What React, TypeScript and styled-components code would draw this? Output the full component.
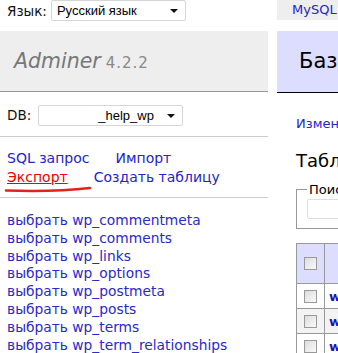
import React from "react";
import styled, { createGlobalStyle } from "styled-components";

const tables = [
  "wp_commentmeta",
  "wp_comments",
  "wp_links",
  "wp_options",
  "wp_postmeta",
  "wp_posts",
  "wp_terms",
  "wp_term_relationships",
];

const App: React.FC = () => {
  return (
    <>
      <GlobalStyle />
      <Page>
        <Sidebar>
          <LangRow>
            <Label>Язык:</Label>
            <FakeSelect width={135}>
              <SelectText>Русский язык</SelectText>
              <Arrow />
            </FakeSelect>
          </LangRow>
          <LogoBand>
            <LogoName>Adminer</LogoName>
            <Version>4.2.2</Version>
          </LogoBand>
          <DbRow>
            <Label>DB:</Label>
            <FakeSelect width={145}>
              <DbValue>_help_wp</DbValue>
              <Arrow />
            </FakeSelect>
          </DbRow>
          <Rule gap={11} />
          <Actions>
            <ActionLine>
              <Link>SQL запрос</Link>
              <Link>Импорт</Link>
            </ActionLine>
            <ActionLine>
              <ExportWrap>
                <Link active>Экспорт</Link>
                <Scribble viewBox="0 0 90 8">
                  <path d="M2 5.5 C 30 6.5, 60 6, 86 3" stroke="#e3231b" strokeWidth="2.6" fill="none" strokeLinecap="round" />
                </Scribble>
              </ExportWrap>
              <Link>Создать таблицу</Link>
            </ActionLine>
          </Actions>
          <Rule gap={10} />
          <TableList>
            {tables.map((t) => (
              <ListLink key={t}>выбрать {t}</ListLink>
            ))}
          </TableList>
        </Sidebar>

        <Content>
          <Breadcrumb>
            <Link>MySQL</Link> » Сервер » help_wp
          </Breadcrumb>
          <Heading>База данных: help_wp</Heading>
          <Body>
            <SmallLink>Изменить базу данных</SmallLink>
            <SubHeading>Таблицы и представления</SubHeading>
            <Fieldset>
              <Legend>Поиск данных в таблицах</Legend>
              <SearchInput />
            </Fieldset>
            <Grid>
              <HeadRow>
                <CheckCell>
                  <Check />
                </CheckCell>
                <HeadCell>Таблица</HeadCell>
              </HeadRow>
              <Row odd={false}>
                <CheckCell>
                  <Check />
                </CheckCell>
                <NameCell>
                  <TableName>wp_commentmeta</TableName>
                </NameCell>
              </Row>
              <Row odd>
                <CheckCell>
                  <Check />
                </CheckCell>
                <NameCell>
                  <TableName>wp_comments</TableName>
                </NameCell>
              </Row>
              <Row odd={false}>
                <CheckCell>
                  <Check />
                </CheckCell>
                <NameCell>
                  <TableName>wp_links</TableName>
                </NameCell>
              </Row>
            </Grid>
          </Body>
        </Content>
      </Page>
    </>
  );
};

export default App;

// ------------------ Styled Components ------------------

const GlobalStyle = createGlobalStyle`
  html, body {
    margin: 0;
    padding: 0;
    background: #fff;
  }
  body {
    font-family: "DejaVu Sans", Verdana, sans-serif;
    font-size: 13px;
    color: #000;
  }
`;

const Page = styled.div`
  display: flex;
  align-items: flex-start;
  width: 338px;
  height: 353px;
  overflow: hidden;
`;

// левое меню
const Sidebar = styled.div`
  flex: none;
  width: 268px;
  display: flex;
  flex-direction: column;
`;

const LangRow = styled.div`
  display: flex;
  align-items: center;
  gap: 4px;
  height: 21px;
  padding-left: 7px;
`;

const Label = styled.span`
  font-size: 13.5px;
  color: #111;
`;

const FakeSelect = styled.div<{ width: number }>`
  position: relative;
  box-sizing: border-box;
  width: ${({ width }) => width}px;
  height: 21px;
  border: 1px solid #d6d6d6;
  border-radius: 2px;
  background: #fff;
  display: flex;
  align-items: center;
`;

const SelectText = styled.span`
  font-family: "Liberation Sans", Arial, sans-serif;
  font-size: 13px;
  padding-left: 5px;
  color: #000;
`;

const DbValue = styled.span`
  font-family: "Liberation Sans", Arial, sans-serif;
  font-size: 13px;
  padding-left: 59px;
  color: #000;
`;

const Arrow = styled.span`
  position: absolute;
  right: 7px;
  top: 8px;
  width: 0;
  height: 0;
  border-left: 4px solid transparent;
  border-right: 4px solid transparent;
  border-top: 4px solid #111;
`;

const LogoBand = styled.div`
  margin-top: 10px;
  height: 61px;
  box-sizing: border-box;
  background: #eee;
  border-bottom: 1px solid #999;
  display: flex;
  align-items: baseline;
  padding: 18px 0 0 14px;
  gap: 5px;
`;

const LogoName = styled.span`
  font-size: 20.5px;
  font-style: italic;
  color: #777;
`;

const Version = styled.span`
  font-size: 15px;
  letter-spacing: 1px;
  color: #888;
`;

const DbRow = styled.div`
  display: flex;
  align-items: center;
  gap: 7px;
  padding: 13px 0 0 7px;
  height: 20px;
`;

const Rule = styled.div<{ gap: number }>`
  height: 1px;
  background: #ccc;
  margin-top: ${({ gap }) => gap}px;
`;

const Actions = styled.div`
  display: flex;
  flex-direction: column;
  padding: 12px 0 0 7px;
`;

const ActionLine = styled.div`
  display: flex;
  gap: 26px;
  line-height: 19px;
`;

const Link = styled.a<{ active?: boolean }>`
  color: ${({ active }) => (active ? "#e00" : "#2424c8")};
  text-decoration: ${({ active }) => (active ? "underline" : "none")};
  font-size: 14px;
  cursor: pointer;
`;

const ExportWrap = styled.span`
  position: relative;
`;

const Scribble = styled.svg`
  position: absolute;
  left: -3px;
  top: 17px;
  width: 90px;
  height: 8px;
`;

const TableList = styled.div`
  display: flex;
  flex-direction: column;
  padding: 14px 0 0 7px;
`;

const ListLink = styled.a`
  color: #2a2ac8;
  font-size: 13.8px;
  line-height: 17.8px;
  white-space: nowrap;
  cursor: pointer;
`;

// правая часть
const Content = styled.div`
  flex: none;
  width: 560px;
  margin-left: 9px;
  display: flex;
  flex-direction: column;
`;

const Breadcrumb = styled.div`
  height: 20px;
  background: #eee;
  padding-left: 15px;
  line-height: 20px;
  font-size: 13px;
  white-space: nowrap;

  ${Link} {
    font-size: 13px;
  }
`;

const Heading = styled.h2`
  margin: 11px 0 0;
  height: 62px;
  box-sizing: border-box;
  background: #ddf;
  border-bottom: 1px solid #000;
  font-size: 21px;
  font-weight: normal;
  padding-left: 22px;
  line-height: 61px;
  white-space: nowrap;
`;

const Body = styled.div`
  padding-left: 19px;
  display: flex;
  flex-direction: column;
  align-items: flex-start;
`;

const SmallLink = styled.a`
  color: #2424c8;
  font-size: 13px;
  margin-top: 23px;
  line-height: 16px;
`;

const SubHeading = styled.h3`
  margin: 18px 0 0;
  font-size: 18px;
  font-weight: normal;
  line-height: 22px;
  white-space: nowrap;
`;

const Fieldset = styled.fieldset`
  margin: 10px 0 0;
  padding: 2px 10px 9px;
  border: 1px solid #999;
  width: 300px;
`;

const Legend = styled.legend`
  font-size: 13px;
  padding: 0 2px;
  white-space: nowrap;
`;

const SearchInput = styled.div`
  width: 180px;
  height: 18px;
  border: 1px solid #ddd;
  border-radius: 2px;
`;

const Grid = styled.div`
  margin-top: 14px;
  border-top: 1px solid #999;
  border-left: 1px solid #999;
  display: flex;
  flex-direction: column;
`;

const HeadRow = styled.div`
  display: flex;
  height: 40px;
  background: #ddf;
  border-bottom: 1px solid #999;
  box-sizing: border-box;
`;

const Row = styled.div<{ odd: boolean }>`
  display: flex;
  height: 25px;
  box-sizing: border-box;
  background: ${({ odd }) => (odd ? "#f3f3f3" : "#fff")};
  border-bottom: 1px solid #999;
`;

const CheckCell = styled.div`
  width: 27px;
  border-right: 1px solid #999;
  display: flex;
  align-items: center;
  justify-content: center;
`;

const HeadCell = styled.div`
  width: 200px;
  display: flex;
  align-items: center;
  padding-left: 40px;
  font-weight: normal;
`;

const NameCell = styled.div`
  width: 200px;
  display: flex;
  align-items: center;
  padding-left: 4px;
`;

const TableName = styled.a`
  color: #1515b8;
  font-weight: bold;
  font-size: 13px;
`;

const Check = styled.span`
  width: 11px;
  height: 11px;
  border: 1px solid #999;
  background: linear-gradient(135deg, #dcdcdc, #fafafa);
`;
